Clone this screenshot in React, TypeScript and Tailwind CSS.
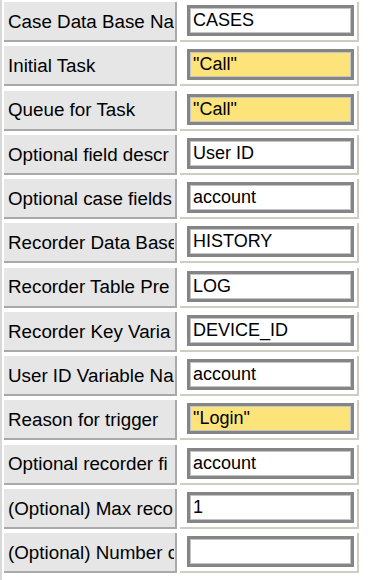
// Labels are cut where the narrow label column cuts them in the screenshot.
const rows: { label: string; value: string; hi?: boolean }[] = [
  { label: "Case Data Base Na", value: "CASES" },
  { label: "Initial Task", value: '"Call"', hi: true },
  { label: "Queue for Task", value: '"Call"', hi: true },
  { label: "Optional field descr", value: "User ID" },
  { label: "Optional case fields", value: "account" },
  { label: "Recorder Data Base", value: "HISTORY" },
  { label: "Recorder Table Pre", value: "LOG" },
  { label: "Recorder Key Varia", value: "DEVICE_ID" },
  { label: "User ID Variable Na", value: "account" },
  { label: "Reason for trigger", value: '"Login"', hi: true },
  { label: "Optional recorder fi", value: "account" },
  { label: "(Optional) Max reco", value: "1" },
  { label: "(Optional) Number c", value: "" },
];

export default function App() {
  return (
    <div
      className="w-[369px] h-[580px] overflow-hidden bg-white border-l-2 border-[#d8d8d8] pl-[2px] pt-[2px]"
      style={{ fontFamily: '"Liberation Sans", Arial, sans-serif' }}
    >
      <div className="flex flex-col gap-[4.25px]">
        {rows.map((r) => (
          <div key={r.label} className="flex gap-[3px] h-[40px]">
            <div className="w-[173px] shrink-0 flex items-center bg-[#e6e6e6] border-r-2 border-b-2 border-[#a9a9a9] pl-[4px] pt-[2px]">
              <div className="w-[166px] overflow-hidden whitespace-nowrap text-[18.8px] text-black">
                {r.label}
              </div>
            </div>
            <div className="w-[179px] shrink-0 bg-white border-r-2 border-b-2 border-[#d0ccc0] pl-[7px] pt-[3px]">
              <div
                className={`w-[167px] h-[31px] border-[3px] border-[#858585] shadow-[inset_0_0_0_1px_#c4c4c4] flex items-center pl-[3px] text-[18px] text-black ${
                  r.hi ? "bg-[#fde47a]" : "bg-white"
                }`}
              >
                {r.value}
              </div>
            </div>
          </div>
        ))}
      </div>
    </div>
  );
}
